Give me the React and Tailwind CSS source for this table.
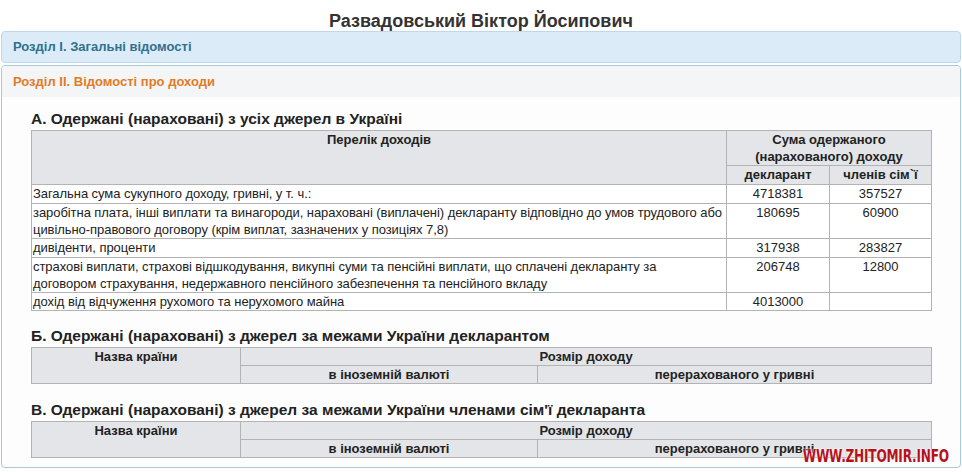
import React from 'react';

const FONT = "font-['Liberation_Sans',Arial,sans-serif]";
const TH = 'border border-[#b3b3b3] bg-[#e3e5e8] font-bold text-center align-top p-0';
const TD = 'border border-[#b3b3b3] align-top px-[1px] pt-0';

const incomeRows = [
  { label: ['Загальна сума сукупного доходу, гривні, у т. ч.:'], a: '4718381', b: '357527', h: 'h-[19px]' },
  {
    label: [
      'заробітна плата, інші виплати та винагороди, нараховані (виплачені) декларанту відповідно до умов трудового або',
      'цивільно-правового договору (крім виплат, зазначених у позиціях 7,8)',
    ],
    a: '180695', b: '60900', h: 'h-[34px]',
  },
  { label: ['дивіденти, проценти'], a: '317938', b: '283827', h: 'h-[19px]' },
  {
    label: [
      'страхові виплати, страхові відшкодування, викупні суми та пенсійні виплати, що сплачені декларанту за',
      'договором страхування, недержавного пенсійного забезпечення та пенсійного вкладу',
    ],
    a: '206748', b: '12800', h: 'h-[34px]',
  },
  { label: ['дохід від відчуження рухомого та нерухомого майна'], a: '4013000', b: '', h: 'h-[18px]' },
];

function Heading({ children, className = '' }) {
  return (
    <h3 className={`text-[15.5px] font-bold leading-[20px] text-[#222] ${className}`}>{children}</h3>
  );
}

function ForeignTable() {
  return (
    <table className="w-[900px] border-collapse table-fixed text-[13px] leading-[17px]">
      <colgroup>
        <col className="w-[209px]" />
        <col className="w-[297px]" />
        <col className="w-[394px]" />
      </colgroup>
      <thead>
        <tr className="h-[18px]">
          <th rowSpan={2} className={TH}>Назва країни</th>
          <th colSpan={2} className={TH}>Розмір доходу</th>
        </tr>
        <tr className="h-[18px]">
          <th className={TH}>в іноземній валюті</th>
          <th className={TH}>перерахованого у гривні</th>
        </tr>
      </thead>
    </table>
  );
}

export default function App() {
  return (
    <div className={`relative w-[962px] h-[472px] overflow-hidden bg-white text-[#222] ${FONT}`}>
      <h1 className="pt-[11px] text-center text-[18px] font-bold leading-[20px] text-[#333]">
        Развадовський Віктор Йосипович
      </h1>

      <div className="mx-px flex h-[32px] items-center rounded-[4px] border border-[#bcd8ee] bg-[#dcebf8] px-[11px] text-[13px] font-bold text-[#31708f]">
        Розділ I. Загальні відомості
      </div>

      <div className="mx-px mt-[2px] h-[403px] overflow-hidden rounded-[4px] border border-[#a9c8de] bg-[#fdfdfd]">
        <div className="flex h-[31px] items-center bg-[#f3f5f6] px-[11px] text-[13px] font-bold text-[#e27b26]">
          Розділ II. Відомості про доходи
        </div>

        <div className="px-[29px] pt-[12px]">
          <Heading className="mb-px">А. Одержані (нараховані) з усіх джерел в Україні</Heading>
          <table className="w-[900px] border-collapse table-fixed text-[13px] leading-[17px]">
            <colgroup>
              <col className="w-[695px]" />
              <col className="w-[103px]" />
              <col className="w-[102px]" />
            </colgroup>
            <thead>
              <tr className="h-[35px]">
                <th rowSpan={2} className={TH}>Перелік доходів</th>
                <th colSpan={2} className={TH}>
                  Сума одержаного<br />(нарахованого) доходу
                </th>
              </tr>
              <tr className="h-[19px]">
                <th className={TH}>декларант</th>
                <th className={TH}>членів сім`ї</th>
              </tr>
            </thead>
            <tbody className="bg-white">
              {incomeRows.map((row, i) => (
                <tr key={i} className={row.h}>
                  <td className={TD}>
                    {row.label.map((line, j) => (
                      <div key={j} className="whitespace-nowrap tracking-[-0.06px]">{line}</div>
                    ))}
                  </td>
                  <td className={`${TD} text-center`}>{row.a}</td>
                  <td className={`${TD} text-center`}>{row.b}</td>
                </tr>
              ))}
            </tbody>
          </table>

          <Heading className="mt-[15px] mb-px">Б. Одержані (нараховані) з джерел за межами України декларантом</Heading>
          <ForeignTable />

          <Heading className="mt-[16px] mb-px">В. Одержані (нараховані) з джерел за межами України членами сім'ї декларанта</Heading>
          <ForeignTable />
        </div>
      </div>

      <div className="absolute right-[13px] bottom-[6px] origin-right scale-x-[0.75] font-['DejaVu_Sans_Condensed','Liberation_Sans_Narrow',sans-serif] text-[18px] font-bold leading-[20px] tracking-[-0.3px] text-[#b5121b] [text-shadow:0_0_2px_#fff,0_0_2px_#fff]">
        WWW.ZHITOMIR.INFO
      </div>
    </div>
  );
}
